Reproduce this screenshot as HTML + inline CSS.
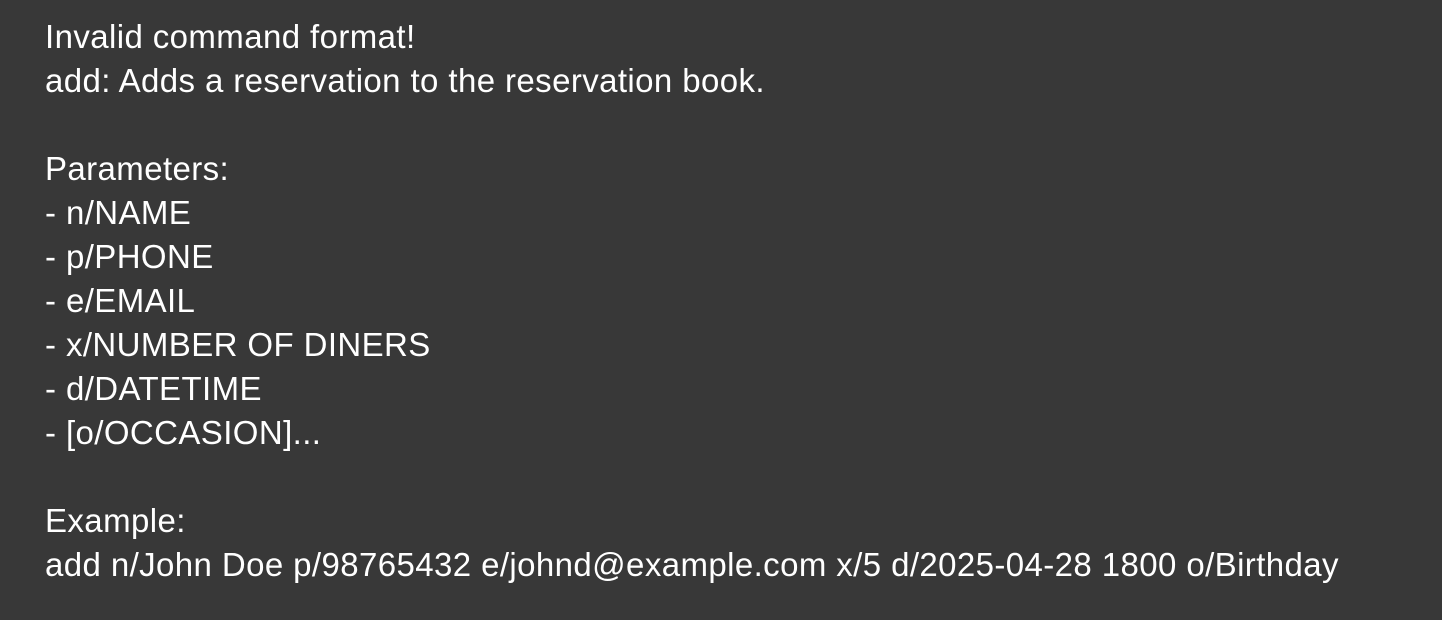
<!DOCTYPE html>
<html><head><meta charset="utf-8"><style>
html,body{margin:0;padding:0;width:1442px;height:620px;background:#383838;overflow:hidden}
.t{position:absolute;left:45px;top:15px;color:#fff;font-family:"Liberation Sans",sans-serif;font-size:33px;line-height:44px;letter-spacing:0.4px;white-space:pre}
</style></head><body>
<div class="t">Invalid command format!
add: Adds a reservation to the reservation book.

Parameters:
- n/NAME
- p/PHONE
- e/EMAIL
- x/NUMBER OF DINERS
- d/DATETIME
- [o/OCCASION]...

Example:
add n/John Doe p/98765432 e/johnd@example.com x/5 d/2025-04-28 1800 o/Birthday</div>
</body></html>
